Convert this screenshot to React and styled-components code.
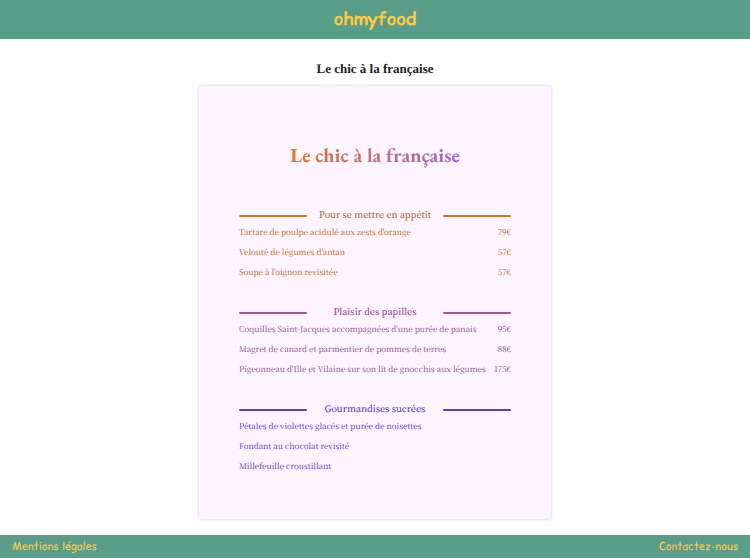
import React from "react";
import styled, { createGlobalStyle } from "styled-components";

const serif = '"Liberation Serif", "Times New Roman", serif';
const headingSerif = '"Source Serif Pro", "Source Serif 4", "Liberation Serif", serif';
const dishSerif = '"Noto Serif CJK SC", "Noto Serif CJK JP", "Source Serif 4", "Liberation Serif", serif';
const titleSerif = '"EB Garamond", "Cormorant Garamond", "Liberation Serif", serif';
const comic = '"Comic Relief", "Comic Sans MS", "Comic Neue", "Open Sans", sans-serif';

const GlobalStyle = createGlobalStyle`
  * { box-sizing: border-box; }
  body { margin: 0; background: #fff; text-rendering: geometricPrecision; }
  h1, h2, h3, ul { margin: 0; padding: 0; }
`;

const Page = styled.div`
  display: flex;
  flex-direction: column;
  min-height: 100vh;
  font-family: ${serif};
`;

const Header = styled.header`
  display: flex;
  justify-content: center;
  padding: 8px;
  background: #589d87;
`;

const Brand = styled.a`
  color: #fdc844;
  font: 700 18px/23px ${comic};
  text-decoration: none;
`;

const Main = styled.main`
  display: flex;
  flex: 1;
  flex-direction: column;
  align-items: center;
  gap: 8px;
  padding: 21px 16px 16px;
`;

const Title = styled.h1`
  color: #222;
  font: 700 13px/18px ${serif};
`;

const Card = styled.article`
  width: 47%;
  min-width: 352px;
  padding: 55px 40px 44px;
  border-radius: 2px;
  background: #fdf4ff;
  box-shadow: 0 0 3px #c9c4cc;
`;

const CardTitle = styled.h2`
  width: fit-content;
  margin: 0 auto 39px;
  background: linear-gradient(90deg, #d97a28, #a565cf);
  background-clip: text;
  color: transparent;
  font: 700 20px/28px ${titleSerif};
`;

const Courses = styled.div`
  display: flex;
  flex-direction: column;
  gap: 24px;
`;

const Section = styled.section`
  color: ${(p) => p.$text};
`;

const Heading = styled.h3`
  display: grid;
  grid-template-columns: 1fr 2fr 1fr;
  align-items: center;
  text-align: center;
  white-space: nowrap;
  font-family: ${headingSerif};
  font-size: 10px;
  font-weight: 400;
  line-height: 16px;

  &::before,
  &::after {
    content: "";
    height: 2px;
    border-radius: 1px;
    background: ${(p) => p.$rule};
  }
`;

const Dishes = styled.ul`
  display: flex;
  flex-direction: column;
  gap: 4px;
  padding-top: 1px;
  list-style: none;
`;

const Dish = styled.li`
  display: flex;
  justify-content: space-between;
  white-space: nowrap;
  font-family: ${dishSerif};
  font-size: 8px;
  line-height: 16px;
`;

const Footer = styled.footer`
  display: flex;
  justify-content: space-between;
  padding: 4px 12px;
  background: #589d87;
`;

const FooterLink = styled.a`
  color: #fdc844;
  font: 400 11px/15px ${comic};
  text-decoration: none;
`;

const courses = [
  {
    title: "Pour se mettre en appétit",
    text: "#b85c10",
    rule: "#c77a1e",
    dishes: [
      { name: "Tartare de poulpe acidulé aux zests d'orange", price: "79€" },
      { name: "Velouté de légumes d'antan", price: "57€" },
      { name: "Soupe à l'oignon revisitée", price: "57€" },
    ],
  },
  {
    title: "Plaisir des papilles",
    text: "#8c4287",
    rule: "#9c5795",
    dishes: [
      { name: "Coquilles Saint-Jacques accompagnées d'une purée de panais", price: "95€" },
      { name: "Magret de canard et parmentier de pommes de terres", price: "88€" },
      { name: "Pigeonneau d'Ille et Vilaine sur son lit de gnocchis aux légumes", price: "175€" },
    ],
  },
  {
    title: "Gourmandises sucrées",
    text: "#542fbd",
    rule: "#5d38cc",
    dishes: [
      { name: "Pétales de violettes glacés et purée de noisettes" },
      { name: "Fondant au chocolat revisité" },
      { name: "Millefeuille croustillant" },
    ],
  },
];

export default function App() {
  return (
    <Page>
      <GlobalStyle />
      <Header>
        <Brand href="#">ohmyfood</Brand>
      </Header>
      <Main>
        <Title>Le chic à la française</Title>
        <Card>
          <CardTitle>Le chic à la française</CardTitle>
          <Courses>
            {courses.map((course) => (
              <Section key={course.title} $text={course.text}>
                <Heading $rule={course.rule}>{course.title}</Heading>
                <Dishes>
                  {course.dishes.map((dish) => (
                    <Dish key={dish.name}>
                      <span>{dish.name}</span>
                      {dish.price && <span>{dish.price}</span>}
                    </Dish>
                  ))}
                </Dishes>
              </Section>
            ))}
          </Courses>
        </Card>
      </Main>
      <Footer>
        <FooterLink href="#">Mentions légales</FooterLink>
        <FooterLink href="#">Contactez-nous</FooterLink>
      </Footer>
    </Page>
  );
}
